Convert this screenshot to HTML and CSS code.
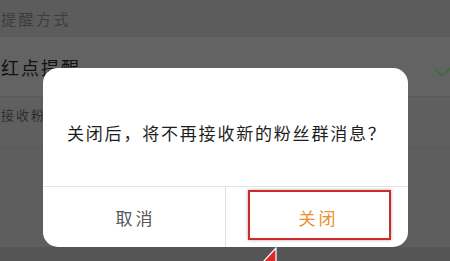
FILE: index.html
```html
<!DOCTYPE html>
<html lang="zh">
<head>
<meta charset="utf-8">
<link rel="stylesheet" href="styles.css">
</head>
<body>
<div class="page">
  <div class="section-head">提醒方式</div>
  <div class="row row-main">
    <span class="row-title">红点提醒</span>
    <svg class="check" width="18" height="12" viewBox="0 0 18 12"><path d="M1 2 L8 9 L17 1" fill="none" stroke="#3f6b40" stroke-width="2"/></svg>
  </div>
  <div class="row row-sub"><span class="row-sub-title">接收粉丝群消息</span></div>
  <div class="row row-rest"></div>
</div>

<div class="dialog">
  <div class="dialog-msg">关闭后，将不再接收新的粉丝群消息？</div>
  <div class="dialog-actions">
    <div class="btn btn-cancel">取消</div>
    <div class="btn btn-ok">关闭</div>
  </div>
</div>

<div class="highlight"></div>
<svg class="arrow" width="20" height="16" viewBox="0 0 20 16"><polygon points="15,1 15,15 2,15" fill="#e0262a" stroke="#ffffff" stroke-width="1.2"/></svg>
</body>
</html>
```

FILE: styles.css
```css
html, body {
  margin: 0;
  padding: 0;
}
body {
  width: 450px;
  height: 261px;
  overflow: hidden;
  background: #555555;
  font-family: "Noto Sans CJK SC", "Noto Sans", sans-serif;
  position: relative;
}
.page {
  display: flex;
  flex-direction: column;
}
.section-head {
  height: 37px;
  background: #5c5c5c;
  color: #3c3c3c;
  font-size: 15px;
  letter-spacing: 2.5px;
  line-height: 37px;
  padding-left: 1px;
}
.row {
  display: flex;
  align-items: center;
}
.row-main {
  height: 60px;
  background: #636363;
  justify-content: space-between;
  border-bottom: 1px solid #5a5a5a;
  box-sizing: border-box;
}
.row-title {
  font-size: 18px;
  letter-spacing: 2px;
  color: #111111;
  padding-left: 1px;
  margin-top: 0px;
}
.check {
  margin-right: 0;
  margin-top: 12px;
  margin-right: -2px;
}
.row-sub {
  height: 51px;
  background: #5f5f5f;
  border-bottom: 1px solid #595959;
  box-sizing: border-box;
}
.row-sub-title {
  font-size: 13px;
  letter-spacing: 2px;
  color: #2e2e2e;
  padding-left: 1px;
  margin-top: -16px;
}
.row-rest {
  height: 99px;
  background: #5e5e5e;
}
.dialog {
  position: absolute;
  left: 43px;
  top: 68px;
  width: 365px;
  height: 179px;
  background: #ffffff;
  border-radius: 15px;
  display: flex;
  flex-direction: column;
}
.dialog-msg {
  height: 119px;
  box-sizing: border-box;
  padding: 52px 0 0 24px;
  font-size: 17px;
  letter-spacing: 1.8px;
  line-height: 26px;
  color: #1e1e1e;
  border-bottom: 1px solid #e4e4e4;
}
.dialog-actions {
  flex: 1;
  display: flex;
}
.btn {
  flex: 1;
  display: flex;
  align-items: center;
  justify-content: center;
  font-size: 17px;
  letter-spacing: 3px;
  padding-left: 3px;
}
.btn-cancel {
  color: #555555;
  border-right: 1px solid #e0e0e0;
}
.btn-ok {
  color: #ec8f2c;
}
.highlight {
  position: absolute;
  left: 248px;
  top: 190px;
  width: 139px;
  height: 46px;
  border: 2px solid #cc2a2c;
  box-shadow: 0 0 3px rgba(0,0,0,0.35);
}
.arrow {
  position: absolute;
  left: 261px;
  top: 247px;
}
```
